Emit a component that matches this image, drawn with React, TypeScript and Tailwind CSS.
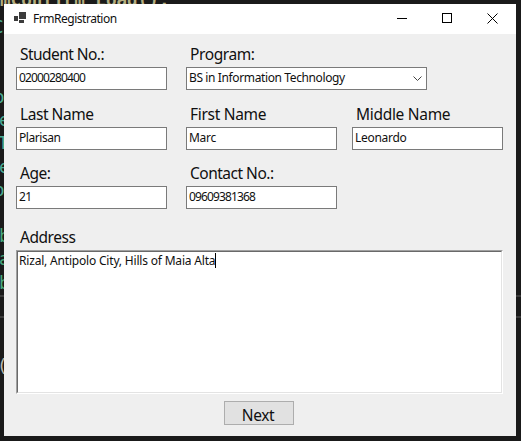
import React from "react";

type FieldProps = { label: string; value: string; labelTracking: string; valueTracking: string };

function Field({ label, value, labelTracking, valueTracking }: FieldProps) {
  return (
    <div className="flex w-[151px] flex-col">
      <label className={`h-[21px] pl-1 text-[15.5px] leading-[20px] whitespace-nowrap ${labelTracking}`}>{label}</label>
      <div className={`mt-0.5 h-[23px] border border-[#7a7a7a] bg-white pl-0.5 text-[12px] leading-[20px] whitespace-nowrap ${valueTracking}`}>{value}</div>
    </div>
  );
}

function EditorBackdrop() {
  const rows = [
    { top: 17, text: "C", style: "left-[-7px] text-[#4aab93]" },
    { top: 87, text: "o", style: "left-[-6px] text-[#4aab93]" },
    { top: 110, text: "e", style: "left-[-1px] text-[#4aab93]" },
    { top: 133, text: "T", style: "left-[-2px] text-[#4aab93]" },
    { top: 157, text: "e", style: "left-[-1px] text-[#4aab93]" },
    { top: 180, text: "o", style: "left-[-6px] text-[#4aab93]" },
    { top: 226, text: "b", style: "left-[-1px] text-[#45a87c]" },
    { top: 249, text: "a", style: "left-[-1px] text-[#45a87c]" },
    { top: 273, text: "b", style: "left-[-1px] text-[#45a87c]" },
    { top: 356, text: "(", style: "left-[-3px] text-[#b8b8b0]" },
  ];
  return (
    <div className="absolute inset-0 overflow-hidden font-['DejaVu_Sans_Mono',monospace] text-[17.6px] leading-[20px]">
      <span className="absolute top-[-10px] left-0 font-bold whitespace-pre text-[#b5ae80]">mConfirm_Load():</span>
      {rows.map((r) => (
        <span key={r.top} className={`absolute ${r.style}`} style={{ top: r.top }}>{r.text}</span>
      ))}
      <div className="absolute top-[295px] h-[2px] w-full bg-[#3a3a3a]" />
      <div className="absolute top-[316px] h-[2px] w-full bg-[#3a3a3a]" />
    </div>
  );
}

export default function App() {
  return (
    <div className="relative h-[441px] w-[521px] overflow-hidden bg-[#1a1a1a] pt-1 pl-1 font-['Noto_Sans',sans-serif] text-[#101010]">
      <EditorBackdrop />
      <div className="relative flex h-[432px] w-[512px] flex-col bg-[#efefef]">
        <header className="flex h-[30px] items-center bg-white pl-2.5">
          <svg className="-mt-[3px]" width="12" height="11" viewBox="0 0 12 11" fill="#3c3c3c" shapeRendering="crispEdges">
            <path d="M5 0h7v7H5zM0 4h4v5H0zM5 8h5v3H5z" />
          </svg>
          <span className="ml-[7px] text-[12px] tracking-[-0.47px]">FrmRegistration</span>
          <div className="mr-[18px] -mt-[2px] ml-auto flex items-center gap-[35px]">
            <svg width="10" height="10" viewBox="0 0 10 10" shapeRendering="crispEdges"><path d="M0 5h10v1H0z" /></svg>
            <svg width="10" height="10" viewBox="0 0 10 10" fill="none" stroke="#000" shapeRendering="crispEdges"><path d="M.5.5h9v9h-9z" /></svg>
            <svg width="11" height="11" viewBox="0 0 11 11" fill="none" stroke="#000"><path d="M.5.5l10 10M10.5.5l-10 10" /></svg>
          </div>
        </header>
        <main className="flex flex-col px-3">
          <div className="mt-[10px] flex gap-[19px]">
            <Field label="Student No.:" value="02000280400" labelTracking="tracking-[-0.55px]" valueTracking="tracking-[-0.87px]" />
            <div className="flex w-[241px] flex-col">
              <label className="h-[21px] pl-1 text-[15.5px] leading-[20px] tracking-[-0.4px]">Program:</label>
              <div className="mt-0.5 flex h-[23px] items-center justify-between border border-[#7a7a7a] bg-white pr-1 pl-0.5 text-[12px] leading-[20px]">
                <span className="-mt-px tracking-[-0.38px]">BS in Information Technology</span>
                <svg className="mt-px" width="9" height="6" viewBox="0 0 9 6" fill="none" stroke="#444"><path d="M.5.5l4 4 4-4" /></svg>
              </div>
            </div>
          </div>
          <div className="mt-[14px] flex">
            <Field label="Last Name" value="Plarisan" labelTracking="tracking-[-0.45px]" valueTracking="tracking-[-0.45px]" />
            <div className="w-[19px]" />
            <Field label="First Name" value="Marc" labelTracking="tracking-[-0.3px]" valueTracking="tracking-[-0.3px]" />
            <div className="w-[15px]" />
            <Field label="Middle Name" value="Leonardo" labelTracking="tracking-[-0.3px]" valueTracking="tracking-[-0.3px]" />
          </div>
          <div className="mt-[13px] flex gap-[19px]">
            <Field label="Age:" value="21" labelTracking="tracking-[-0.5px]" valueTracking="tracking-[-0.5px]" />
            <Field label="Contact No.:" value="09609381368" labelTracking="tracking-[-0.5px]" valueTracking="tracking-[-0.87px]" />
          </div>
          <label className="mt-[18px] h-[21px] pl-1 text-[15.5px] leading-[20px] tracking-[-0.45px]">Address</label>
          <div className="mt-0.5 h-[144px] w-[487px] border border-t-[#a0a0a0] border-r-white border-b-white border-l-[#a0a0a0]">
            <div className="flex h-full border border-t-[#696969] border-r-[#e3e3e3] border-b-[#e3e3e3] border-l-[#696969] bg-white pl-px text-[12px] leading-[18px]">
              <span className="tracking-[-0.19px]">Rizal, Antipolo City, Hills of Maia Alta</span>
              <span className="mt-px h-[15px] w-px bg-black" />
            </div>
          </div>
          <button className="mt-[7px] ml-[208px] h-[24px] w-[70px] border border-[#adadad] bg-[#e1e1e1] pr-[2px] text-[15.5px] leading-[26px] tracking-[-0.4px]">Next</button>
        </main>
      </div>
    </div>
  );
}
